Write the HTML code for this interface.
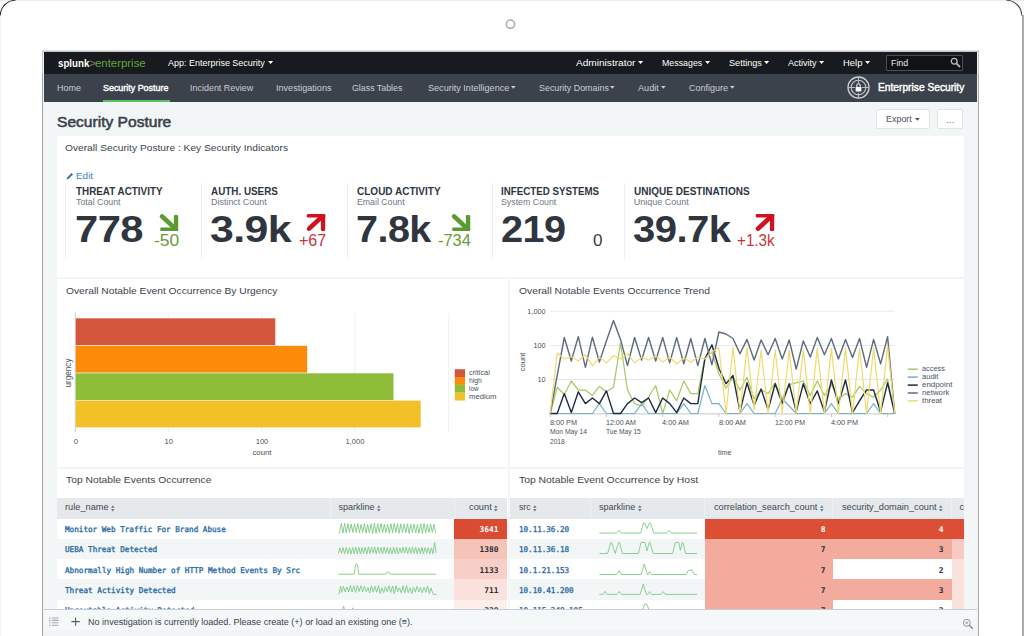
<!DOCTYPE html>
<html lang="en"><head><meta charset="utf-8"><title>Security Posture</title>
<style>
html,body{margin:0;padding:0;background:#fff;}
body{width:1024px;height:636px;overflow:hidden;position:relative;font-family:"Liberation Sans",sans-serif;}
#root{position:absolute;left:0;top:0;width:1024px;height:636px;overflow:hidden;background:#fff;}
#root span{display:inline-block;}
svg{position:absolute;overflow:visible;}
</style></head><body><div id="root">
<div style="position:absolute;left:0.00px;top:0.00px;width:1024.00px;height:1.00px;background:#ececec;"></div>
<div style="position:absolute;left:0.00px;top:16.00px;width:1.00px;height:620.00px;background:#f4f4f4;"></div>
<div style="position:absolute;left:1021.60px;top:15.00px;width:2.40px;height:621.00px;background:#ababab;"></div>
<svg style="left:0;top:0" width="1024" height="40"><path d="M0.3 15.5 A15.2 15.2 0 0 1 15.5 0.3" fill="none" stroke="#3a3a3a" stroke-width="1.1"/><path d="M1006.5 0.3 A15.2 15.2 0 0 1 1021.7 15.5" fill="none" stroke="#4a4a4a" stroke-width="1.1"/><circle cx="510.5" cy="24.2" r="4.1" fill="none" stroke="#a9a9a9" stroke-width="1.5"/></svg>
<div style="position:absolute;left:42.00px;top:49.50px;width:936.80px;height:1.20px;background:#dedede;"></div>
<div style="position:absolute;left:42.00px;top:50.60px;width:936.80px;height:1.40px;background:#c4c5c6;"></div>
<div style="position:absolute;left:42.20px;top:51.90px;width:936.40px;height:584.10px;background:#f1f1f1;"></div>
<div style="position:absolute;left:42.20px;top:51.90px;width:1.20px;height:23.00px;background:#c6c7c8;"></div>
<div style="position:absolute;left:977.50px;top:51.90px;width:1.20px;height:23.00px;background:#c6c7c8;"></div>
<div style="position:absolute;left:44.20px;top:51.90px;width:932.40px;height:584.10px;background:#f2f6f6;"></div>
<div style="position:absolute;left:44.20px;top:51.90px;width:932.40px;height:21.90px;background:#171a1e;"></div>
<div style="position:absolute;left:44.20px;top:73.80px;width:932.40px;height:28.20px;background:#3b424b;"></div>
<div style="position:absolute;left:102.90px;top:99.90px;width:66.80px;height:2.10px;background:#5cc05c;"></div>
<span id="t1" style="position:absolute;left:57.80px;transform-origin:0 50%;top:57.74px;font:700 11px/11px 'Liberation Sans', sans-serif;color:#ffffff;white-space:pre;transform:scaleX(0.8857);">splunk</span>
<span id="t2" style="position:absolute;left:88.60px;transform-origin:0 50%;top:57.94px;font:700 11px/11px 'Liberation Sans', sans-serif;color:#586e4c;white-space:pre;transform:scaleX(1.0874);">&gt;</span>
<span id="t3" style="position:absolute;left:95.40px;transform-origin:0 50%;top:57.94px;font:400 11px/11px 'Liberation Sans', sans-serif;color:#65a637;white-space:pre;transform:scaleX(1.0363);">enterprise</span>
<span id="t4" style="position:absolute;left:168.40px;transform-origin:0 50%;top:57.67px;font:400 9.4px/9.4px 'Liberation Sans', sans-serif;color:#ffffff;white-space:pre;transform:scaleX(0.9575);">App: Enterprise Security</span>
<svg style="left:268.40px;top:60.60px" width="5.2" height="3.0"><path d="M0 0H5.2L2.6 3.0Z" fill="#fff"/></svg>
<span id="t5" style="position:absolute;left:576.10px;transform-origin:0 50%;top:57.67px;font:400 9.4px/9.4px 'Liberation Sans', sans-serif;color:#ffffff;white-space:pre;transform:scaleX(1.0772);">Administrator</span>
<svg style="left:638.30px;top:60.60px" width="5.2" height="3.0"><path d="M0 0H5.2L2.6 3.0Z" fill="#fff"/></svg>
<span id="t6" style="position:absolute;left:662.00px;transform-origin:0 50%;top:57.67px;font:400 9.4px/9.4px 'Liberation Sans', sans-serif;color:#ffffff;white-space:pre;transform:scaleX(0.9407);">Messages</span>
<svg style="left:704.90px;top:60.60px" width="5.2" height="3.0"><path d="M0 0H5.2L2.6 3.0Z" fill="#fff"/></svg>
<span id="t7" style="position:absolute;left:728.60px;transform-origin:0 50%;top:57.67px;font:400 9.4px/9.4px 'Liberation Sans', sans-serif;color:#ffffff;white-space:pre;transform:scaleX(0.9712);">Settings</span>
<svg style="left:763.60px;top:60.60px" width="5.2" height="3.0"><path d="M0 0H5.2L2.6 3.0Z" fill="#fff"/></svg>
<span id="t8" style="position:absolute;left:787.60px;transform-origin:0 50%;top:57.67px;font:400 9.4px/9.4px 'Liberation Sans', sans-serif;color:#ffffff;white-space:pre;transform:scaleX(0.9629);">Activity</span>
<svg style="left:818.60px;top:60.60px" width="5.2" height="3.0"><path d="M0 0H5.2L2.6 3.0Z" fill="#fff"/></svg>
<span id="t9" style="position:absolute;left:843.00px;transform-origin:0 50%;top:57.67px;font:400 9.4px/9.4px 'Liberation Sans', sans-serif;color:#ffffff;white-space:pre;transform:scaleX(1.0062);">Help</span>
<svg style="left:864.90px;top:60.60px" width="5.2" height="3.0"><path d="M0 0H5.2L2.6 3.0Z" fill="#fff"/></svg>
<div style="position:absolute;left:885.60px;top:54.70px;width:77.70px;height:16.50px;background:#101215;box-sizing:border-box;border:1px solid #4a4f57;border-radius:1px;"></div>
<span id="t10" style="position:absolute;left:891.40px;transform-origin:0 50%;top:57.67px;font:400 9.4px/9.4px 'Liberation Sans', sans-serif;color:#e8eaec;white-space:pre;transform:scaleX(0.9425);">Find</span>
<svg style="left:950px;top:57px" width="11" height="11"><circle cx="4.2" cy="4.2" r="2.9" fill="none" stroke="#b9bec5" stroke-width="1.3"/><path d="M6.4 6.4L9.6 9.6" stroke="#b9bec5" stroke-width="1.6" stroke-linecap="round"/></svg>
<span id="t11" style="position:absolute;left:57.00px;transform-origin:0 50%;top:82.97px;font:400 9.6px/9.6px 'Liberation Sans', sans-serif;color:#c9ced4;white-space:pre;transform:scaleX(0.9377);">Home</span>
<span id="t12" style="position:absolute;left:103.00px;transform-origin:0 50%;top:82.97px;font:400 9.6px/9.6px 'Liberation Sans', sans-serif;color:#ffffff;white-space:pre;transform:scaleX(0.9291);-webkit-text-stroke:0.4px #fff;">Security Posture</span>
<span id="t13" style="position:absolute;left:190.40px;transform-origin:0 50%;top:82.97px;font:400 9.6px/9.6px 'Liberation Sans', sans-serif;color:#c9ced4;white-space:pre;transform:scaleX(0.9331);">Incident Review</span>
<span id="t14" style="position:absolute;left:275.50px;transform-origin:0 50%;top:82.97px;font:400 9.6px/9.6px 'Liberation Sans', sans-serif;color:#c9ced4;white-space:pre;transform:scaleX(0.9459);">Investigations</span>
<span id="t15" style="position:absolute;left:352.40px;transform-origin:0 50%;top:82.97px;font:400 9.6px/9.6px 'Liberation Sans', sans-serif;color:#c9ced4;white-space:pre;transform:scaleX(0.9205);">Glass Tables</span>
<span id="t16" style="position:absolute;left:428.00px;transform-origin:0 50%;top:82.97px;font:400 9.6px/9.6px 'Liberation Sans', sans-serif;color:#c9ced4;white-space:pre;transform:scaleX(0.9469);">Security Intelligence</span>
<svg style="left:511.00px;top:86.40px" width="4.6" height="2.8"><path d="M0 0H4.6L2.3 2.8Z" fill="#c9ced4"/></svg>
<span id="t17" style="position:absolute;left:538.60px;transform-origin:0 50%;top:82.97px;font:400 9.6px/9.6px 'Liberation Sans', sans-serif;color:#c9ced4;white-space:pre;transform:scaleX(0.9297);">Security Domains</span>
<svg style="left:610.20px;top:86.40px" width="4.6" height="2.8"><path d="M0 0H4.6L2.3 2.8Z" fill="#c9ced4"/></svg>
<span id="t18" style="position:absolute;left:638.40px;transform-origin:0 50%;top:82.97px;font:400 9.6px/9.6px 'Liberation Sans', sans-serif;color:#c9ced4;white-space:pre;transform:scaleX(0.9509);">Audit</span>
<svg style="left:660.80px;top:86.40px" width="4.6" height="2.8"><path d="M0 0H4.6L2.3 2.8Z" fill="#c9ced4"/></svg>
<span id="t19" style="position:absolute;left:688.90px;transform-origin:0 50%;top:82.97px;font:400 9.6px/9.6px 'Liberation Sans', sans-serif;color:#c9ced4;white-space:pre;transform:scaleX(0.9397);">Configure</span>
<svg style="left:729.80px;top:86.40px" width="4.6" height="2.8"><path d="M0 0H4.6L2.3 2.8Z" fill="#c9ced4"/></svg>
<svg style="left:847.2px;top:76.2px" width="23" height="23" viewBox="-11.5 -11.5 23 23"><circle r="10.5" fill="none" stroke="#c9cdd1" stroke-width="1.35"/><circle r="7.3" fill="none" stroke="#c3c7cb" stroke-width="1.15"/><path d="M0 -10.5V-4.6M0 10.5V5.2M-10.5 0H-3.6M10.5 0H3.6" stroke="#b9bdc2" stroke-width="1.1"/><rect x="-2.9" y="-0.6" width="5.8" height="4.6" rx="0.6" fill="#f6f7f8"/><path d="M-1.7 -0.6V-2.1A1.7 1.7 0 0 1 1.7 -2.1V-0.6" fill="none" stroke="#e9ebed" stroke-width="1.1"/></svg>
<span id="t20" style="position:absolute;left:877.50px;transform-origin:0 50%;top:82.45px;font:400 11.3px/11.3px 'Liberation Sans', sans-serif;color:#ffffff;white-space:pre;transform:scaleX(0.9043);-webkit-text-stroke:0.45px #fff;">Enterprise Security</span>
<span id="t21" style="position:absolute;left:57.20px;transform-origin:0 50%;top:114.51px;font:400 14.5px/14.5px 'Liberation Sans', sans-serif;color:#3a424b;white-space:pre;transform:scaleX(1.0743);-webkit-text-stroke:0.55px #3a424b;">Security Posture</span>
<div style="position:absolute;left:875.70px;top:109.40px;width:54.30px;height:19.80px;background:#fff;box-sizing:border-box;border:1px solid #dfe3e6;border-radius:2px;"></div>
<span id="t22" style="position:absolute;left:885.60px;transform-origin:0 50%;top:115.12px;font:400 9.3px/9.3px 'Liberation Sans', sans-serif;color:#4a525b;white-space:pre;transform:scaleX(0.9600);">Export</span>
<svg style="left:915.40px;top:118.30px" width="4.8" height="2.8"><path d="M0 0H4.8L2.4 2.8Z" fill="#4a525b"/></svg>
<div style="position:absolute;left:936.50px;top:109.40px;width:26.80px;height:19.80px;background:#fff;box-sizing:border-box;border:1px solid #dfe3e6;border-radius:2px;"></div>
<span id="t23" style="position:absolute;left:945.60px;transform-origin:0 50%;top:115.72px;font:400 9.3px/9.3px 'Liberation Sans', sans-serif;color:#6a727b;white-space:pre;transform:scaleX(1.1097);">...</span>
<div style="position:absolute;left:56.50px;top:136.30px;width:907.20px;height:140.70px;background:#fff;"></div>
<span id="t24" style="position:absolute;left:64.80px;transform-origin:0 50%;top:143.28px;font:400 9.8px/9.8px 'Liberation Sans', sans-serif;color:#3c444d;white-space:pre;transform:scaleX(1.0421);">Overall Security Posture : Key Security Indicators</span>
<svg style="left:65.8px;top:171.6px" width="8" height="8"><path d="M0.6 7.4L1.2 5.4L5.6 1L7 2.4L2.6 6.8Z" fill="#2f6fa8"/></svg>
<span id="t25" style="position:absolute;left:75.70px;transform-origin:0 50%;top:170.58px;font:400 9.8px/9.8px 'Liberation Sans', sans-serif;color:#3a86c4;white-space:pre;transform:scaleX(1.0124);">Edit</span>
<span id="t26" style="position:absolute;left:75.50px;transform-origin:0 50%;top:186.59px;font:700 10.4px/10.4px 'Liberation Sans', sans-serif;color:#2f3640;white-space:pre;transform:scaleX(0.9484);">THREAT ACTIVITY</span>
<span id="t27" style="position:absolute;left:75.50px;transform-origin:0 50%;top:197.56px;font:400 9.0px/9.0px 'Liberation Sans', sans-serif;color:#70777f;white-space:pre;transform:scaleX(0.9774);">Total Count</span>
<span id="t28" style="position:absolute;left:74.70px;transform-origin:0 50%;top:211.56px;font:700 36.6px/36.6px 'Liberation Sans', sans-serif;color:#2f3640;white-space:pre;transform:scaleX(1.1406);letter-spacing:-0.5px;">778</span>
<span id="t29" style="position:absolute;left:154.40px;transform-origin:0 50%;top:232.98px;font:400 15.8px/15.8px 'Liberation Sans', sans-serif;color:#6a9a3a;white-space:pre;transform:scaleX(1.1031);">-50</span>
<svg style="left:158.50px;top:214.20px" width="20" height="18"><path d="M3.1 2.4L16 14.4" stroke="#5b9a31" stroke-width="4.7" stroke-linecap="round" fill="none"/><rect x="1.2" y="13.6" width="18" height="3.4" rx="1.2" fill="#5b9a31"/><rect x="14.9" y="1.0" width="4.3" height="16" rx="1.2" fill="#5b9a31"/></svg>
<span id="t30" style="position:absolute;left:210.60px;transform-origin:0 50%;top:186.59px;font:700 10.4px/10.4px 'Liberation Sans', sans-serif;color:#2f3640;white-space:pre;transform:scaleX(0.9498);">AUTH. USERS</span>
<span id="t31" style="position:absolute;left:210.60px;transform-origin:0 50%;top:197.56px;font:400 9.0px/9.0px 'Liberation Sans', sans-serif;color:#70777f;white-space:pre;transform:scaleX(0.9941);">Distinct Count</span>
<span id="t32" style="position:absolute;left:209.80px;transform-origin:0 50%;top:211.56px;font:700 36.6px/36.6px 'Liberation Sans', sans-serif;color:#2f3640;white-space:pre;transform:scaleX(1.1719);letter-spacing:-0.5px;">3.9k</span>
<span id="t33" style="position:absolute;left:298.80px;transform-origin:0 50%;top:232.98px;font:400 15.8px/15.8px 'Liberation Sans', sans-serif;color:#c2373c;white-space:pre;transform:scaleX(1.0150);">+67</span>
<svg style="left:305.60px;top:213.90px" width="20" height="18"><path d="M3.1 14.6L16 2.6" stroke="#d0111e" stroke-width="4.7" stroke-linecap="round" fill="none"/><rect x="0.8" y="0" width="18.4" height="3.4" rx="1.2" fill="#d0111e"/><rect x="14.9" y="0" width="4.3" height="16.9" rx="1.2" fill="#d0111e"/></svg>
<span id="t34" style="position:absolute;left:357.00px;transform-origin:0 50%;top:186.59px;font:700 10.4px/10.4px 'Liberation Sans', sans-serif;color:#2f3640;white-space:pre;transform:scaleX(0.9633);">CLOUD ACTIVITY</span>
<span id="t35" style="position:absolute;left:357.00px;transform-origin:0 50%;top:197.56px;font:400 9.0px/9.0px 'Liberation Sans', sans-serif;color:#70777f;white-space:pre;transform:scaleX(0.9708);">Email Count</span>
<span id="t36" style="position:absolute;left:356.20px;transform-origin:0 50%;top:211.56px;font:700 36.6px/36.6px 'Liberation Sans', sans-serif;color:#2f3640;white-space:pre;transform:scaleX(1.0809);letter-spacing:-0.5px;">7.8k</span>
<span id="t37" style="position:absolute;left:437.70px;transform-origin:0 50%;top:232.98px;font:400 15.8px/15.8px 'Liberation Sans', sans-serif;color:#6a9a3a;white-space:pre;transform:scaleX(1.0403);">-734</span>
<svg style="left:450.90px;top:214.20px" width="20" height="18"><path d="M3.1 2.4L16 14.4" stroke="#5b9a31" stroke-width="4.7" stroke-linecap="round" fill="none"/><rect x="1.2" y="13.6" width="18" height="3.4" rx="1.2" fill="#5b9a31"/><rect x="14.9" y="1.0" width="4.3" height="16" rx="1.2" fill="#5b9a31"/></svg>
<span id="t38" style="position:absolute;left:501.30px;transform-origin:0 50%;top:186.59px;font:700 10.4px/10.4px 'Liberation Sans', sans-serif;color:#2f3640;white-space:pre;transform:scaleX(0.9388);">INFECTED SYSTEMS</span>
<span id="t39" style="position:absolute;left:501.30px;transform-origin:0 50%;top:197.56px;font:400 9.0px/9.0px 'Liberation Sans', sans-serif;color:#70777f;white-space:pre;transform:scaleX(0.9782);">System Count</span>
<span id="t40" style="position:absolute;left:500.50px;transform-origin:0 50%;top:211.56px;font:700 36.6px/36.6px 'Liberation Sans', sans-serif;color:#2f3640;white-space:pre;transform:scaleX(1.0835);letter-spacing:-0.5px;">219</span>
<span id="t41" style="position:absolute;left:592.50px;transform-origin:0 50%;top:232.98px;font:400 15.8px/15.8px 'Liberation Sans', sans-serif;color:#3a3f47;white-space:pre;transform:scaleX(1.0799);">0</span>
<span id="t42" style="position:absolute;left:633.80px;transform-origin:0 50%;top:186.59px;font:700 10.4px/10.4px 'Liberation Sans', sans-serif;color:#2f3640;white-space:pre;transform:scaleX(0.9642);">UNIQUE DESTINATIONS</span>
<span id="t43" style="position:absolute;left:633.80px;transform-origin:0 50%;top:197.56px;font:400 9.0px/9.0px 'Liberation Sans', sans-serif;color:#70777f;white-space:pre;">Unique Count</span>
<span id="t44" style="position:absolute;left:633.00px;transform-origin:0 50%;top:211.56px;font:700 36.6px/36.6px 'Liberation Sans', sans-serif;color:#2f3640;white-space:pre;transform:scaleX(1.0961);letter-spacing:-0.5px;">39.7k</span>
<span id="t45" style="position:absolute;left:736.90px;transform-origin:0 50%;top:232.98px;font:400 15.8px/15.8px 'Liberation Sans', sans-serif;color:#c2373c;white-space:pre;transform:scaleX(0.9643);">+1.3k</span>
<svg style="left:754.70px;top:213.90px" width="20" height="18"><path d="M3.1 14.6L16 2.6" stroke="#d0111e" stroke-width="4.7" stroke-linecap="round" fill="none"/><rect x="0.8" y="0" width="18.4" height="3.4" rx="1.2" fill="#d0111e"/><rect x="14.9" y="0" width="4.3" height="16.9" rx="1.2" fill="#d0111e"/></svg>
<div style="position:absolute;left:65.30px;top:183.40px;width:1.00px;height:75.20px;background:#eeeff0;"></div>
<div style="position:absolute;left:200.90px;top:183.40px;width:1.00px;height:75.20px;background:#eeeff0;"></div>
<div style="position:absolute;left:347.30px;top:183.40px;width:1.00px;height:75.20px;background:#eeeff0;"></div>
<div style="position:absolute;left:492.00px;top:183.40px;width:1.00px;height:75.20px;background:#eeeff0;"></div>
<div style="position:absolute;left:623.90px;top:183.40px;width:1.00px;height:75.20px;background:#eeeff0;"></div>
<div style="position:absolute;left:56.50px;top:279.00px;width:451.30px;height:187.70px;background:#fff;"></div>
<div style="position:absolute;left:510.30px;top:279.00px;width:453.40px;height:187.70px;background:#fff;"></div>
<span id="t46" style="position:absolute;left:65.50px;transform-origin:0 50%;top:286.48px;font:400 9.8px/9.8px 'Liberation Sans', sans-serif;color:#3c444d;white-space:pre;transform:scaleX(1.0469);">Overall Notable Event Occurrence By Urgency</span>
<span id="t47" style="position:absolute;left:518.60px;transform-origin:0 50%;top:286.48px;font:400 9.8px/9.8px 'Liberation Sans', sans-serif;color:#3c444d;white-space:pre;transform:scaleX(1.0533);">Overall Notable Events Occurrence Trend</span>
<svg style="left:0;top:0" width="1024" height="636"><path d="M168.8 313.5V432" stroke="#eff0f1" stroke-width="1"/><path d="M262.0 313.5V432" stroke="#eff0f1" stroke-width="1"/><path d="M355.0 313.5V432" stroke="#eff0f1" stroke-width="1"/><path d="M448.7 313.5V432" stroke="#eff0f1" stroke-width="1"/><path d="M75.3 312.5V432.5" stroke="#c9cdd1" stroke-width="1"/><rect x="75.8" y="318.3" width="199.5" height="26.8" fill="#d2573d"/><rect x="75.8" y="345.8" width="231.4" height="26.8" fill="#fc8b0a"/><rect x="75.8" y="373.3" width="317.7" height="26.8" fill="#8ebd3a"/><rect x="75.8" y="400.6" width="344.9" height="26.8" fill="#f4c028"/><rect x="454.8" y="369.2" width="10.2" height="7.9" fill="#d2573d"/><rect x="454.8" y="377.0" width="10.2" height="7.9" fill="#fc8b0a"/><rect x="454.8" y="384.8" width="10.2" height="7.9" fill="#8ebd3a"/><rect x="454.8" y="392.6" width="10.2" height="7.9" fill="#f4c028"/></svg>
<span id="t48" style="position:absolute;left:75.90px;transform-origin:0 50%;top:437.94px;font:400 7.6px/7.6px 'Liberation Sans', sans-serif;color:#4a525b;white-space:pre;transform:translateX(-50%);">0</span>
<span id="t49" style="position:absolute;left:168.80px;transform-origin:0 50%;top:437.94px;font:400 7.6px/7.6px 'Liberation Sans', sans-serif;color:#4a525b;white-space:pre;transform:translateX(-50%);">10</span>
<span id="t50" style="position:absolute;left:262.00px;transform-origin:0 50%;top:437.94px;font:400 7.6px/7.6px 'Liberation Sans', sans-serif;color:#4a525b;white-space:pre;transform:translateX(-50%);">100</span>
<span id="t51" style="position:absolute;left:354.90px;transform-origin:0 50%;top:437.94px;font:400 7.6px/7.6px 'Liberation Sans', sans-serif;color:#4a525b;white-space:pre;transform:translateX(-50%);">1,000</span>
<span id="t52" style="position:absolute;left:262.00px;transform-origin:0 50%;top:448.62px;font:400 7.8px/7.8px 'Liberation Sans', sans-serif;color:#4a525b;white-space:pre;transform:translateX(-50%);">count</span>
<span style="position:absolute;left:69.4px;top:373.0px;font:400 8.2px/8px 'Liberation Sans', sans-serif;color:#4a525b;white-space:pre;transform:translate(-50%,-50%) rotate(-90deg);">urgency</span>
<span id="t53" style="position:absolute;left:468.80px;transform-origin:0 50%;top:369.14px;font:400 7.6px/7.6px 'Liberation Sans', sans-serif;color:#4a525b;white-space:pre;transform:scaleX(0.9660);">critical</span>
<span id="t54" style="position:absolute;left:468.80px;transform-origin:0 50%;top:376.99px;font:400 7.6px/7.6px 'Liberation Sans', sans-serif;color:#4a525b;white-space:pre;transform:scaleX(0.8914);">high</span>
<span id="t55" style="position:absolute;left:468.80px;transform-origin:0 50%;top:384.84px;font:400 7.6px/7.6px 'Liberation Sans', sans-serif;color:#4a525b;white-space:pre;transform:scaleX(0.8416);">low</span>
<span id="t56" style="position:absolute;left:468.80px;transform-origin:0 50%;top:392.69px;font:400 7.6px/7.6px 'Liberation Sans', sans-serif;color:#4a525b;white-space:pre;transform:scaleX(1.0142);">medium</span>
<svg style="left:0;top:0" width="1024" height="636"><path d="M550 311.2H894.5" stroke="#e6e8ea" stroke-width="1"/><path d="M550 345.5H894.5" stroke="#e6e8ea" stroke-width="1"/><path d="M550 379.5H894.5" stroke="#e6e8ea" stroke-width="1"/><path d="M550 413.9H894.5" stroke="#c3c8cc" stroke-width="1"/><path d="M550.2 413.5V417.0" stroke="#c3c8cc" stroke-width="1"/><path d="M606.4 413.5V417.0" stroke="#c3c8cc" stroke-width="1"/><path d="M662.7 413.5V417.0" stroke="#c3c8cc" stroke-width="1"/><path d="M718.9 413.5V417.0" stroke="#c3c8cc" stroke-width="1"/><path d="M775.2 413.5V417.0" stroke="#c3c8cc" stroke-width="1"/><path d="M831.4 413.5V417.0" stroke="#c3c8cc" stroke-width="1"/><path d="M887.6 413.5V417.0" stroke="#c3c8cc" stroke-width="1"/><polyline points="550.2,413.5 557.2,387.3 564.3,394.5 571.3,381.0 578.3,390.0 585.4,390.0 592.4,395.4 599.4,386.4 606.4,391.8 613.5,387.3 620.5,343.0 627.5,390.0 634.6,403.6 641.6,406.0 648.6,397.0 655.7,385.5 662.7,413.5 669.7,390.0 676.7,400.8 683.8,381.0 690.8,393.6 697.8,393.6 704.9,357.4 711.9,352.0 718.9,373.7 726.0,388.0 733.0,377.3 740.0,390.0 747.0,377.3 754.1,399.0 761.1,390.0 768.1,393.6 775.2,382.8 782.2,399.0 789.2,384.6 796.2,382.8 803.3,381.0 810.3,395.4 817.3,381.0 824.4,395.4 831.4,384.6 838.4,399.0 845.5,393.6 852.5,397.2 859.5,386.4 866.6,393.6 873.6,397.2 880.6,390.0 887.6,379.1 894.7,413.5" fill="none" stroke="#a9c964" stroke-width="1.25" stroke-linejoin="round"/><polyline points="550.2,413.5 557.2,413.5 564.3,413.5 571.3,413.5 578.3,413.5 585.4,413.5 592.4,413.5 599.4,403.6 606.4,413.5 613.5,413.5 620.5,413.5 627.5,413.5 634.6,413.5 641.6,403.6 648.6,413.5 655.7,413.5 662.7,413.5 669.7,413.5 676.7,413.5 683.8,403.6 690.8,413.5 697.8,413.5 704.9,385.5 711.9,403.6 718.9,403.6 726.0,413.5 733.0,413.5 740.0,413.5 747.0,403.6 754.1,413.5 761.1,413.5 768.1,413.5 775.2,413.5 782.2,399.0 789.2,406.0 796.2,413.5 803.3,413.5 810.3,413.5 817.3,413.5 824.4,413.5 831.4,403.6 838.4,413.5 845.5,413.5 852.5,413.5 859.5,413.5 866.6,413.5 873.6,403.6 880.6,413.5 887.6,413.5 894.7,413.5" fill="none" stroke="#74b3c9" stroke-width="1.2" stroke-linejoin="round"/><polyline points="550.2,413.5 557.2,413.5 564.3,393.6 571.3,412.6 578.3,391.8 585.4,403.6 592.4,398.0 599.4,403.6 606.4,390.9 613.5,413.5 620.5,413.5 627.5,403.6 634.6,398.0 641.6,402.6 648.6,398.0 655.7,412.6 662.7,398.0 669.7,403.6 676.7,412.6 683.8,398.0 690.8,403.6 697.8,403.6 704.9,359.0 711.9,344.8 718.9,368.3 726.0,383.7 733.0,375.5 740.0,411.7 747.0,382.8 754.1,405.4 761.1,389.0 768.1,409.9 775.2,383.7 782.2,403.6 789.2,383.7 796.2,411.7 803.3,383.7 810.3,403.6 817.3,390.9 824.4,411.7 831.4,380.0 838.4,403.6 845.5,380.0 852.5,412.6 859.5,400.8 866.6,390.0 873.6,390.0 880.6,411.7 887.6,382.8 894.7,413.5" fill="none" stroke="#1d2c42" stroke-width="1.4" stroke-linejoin="round"/><polyline points="550.2,413.5 557.2,375.5 564.3,337.5 571.3,361.0 578.3,336.6 585.4,367.4 592.4,337.2 599.4,362.0 606.4,341.0 613.5,320.4 620.5,339.4 627.5,365.6 634.6,337.5 641.6,360.0 648.6,337.5 655.7,361.0 662.7,337.5 669.7,362.9 676.7,337.5 683.8,363.8 690.8,338.5 697.8,365.6 704.9,338.5 711.9,364.7 718.9,332.0 726.0,334.0 733.0,338.5 740.0,353.8 747.0,339.4 754.1,360.0 761.1,340.0 768.1,354.7 775.2,338.5 782.2,359.0 789.2,340.0 796.2,369.0 803.3,341.0 810.3,357.0 817.3,337.5 824.4,354.7 831.4,338.5 838.4,359.0 845.5,339.4 852.5,357.4 859.5,338.5 866.6,367.4 873.6,339.4 880.6,363.8 887.6,336.6 894.7,413.5" fill="none" stroke="#5d6b80" stroke-width="1.4" stroke-linejoin="round"/><polyline points="550.2,413.5 557.2,353.0 564.3,359.0 571.3,356.5 578.3,361.0 585.4,354.7 592.4,365.6 599.4,357.4 606.4,362.9 613.5,355.6 620.5,359.0 627.5,353.8 634.6,362.9 641.6,357.4 648.6,360.0 655.7,356.0 662.7,362.0 669.7,357.0 676.7,364.0 683.8,358.0 690.8,362.0 697.8,357.0 704.9,359.0 711.9,352.0 718.9,347.5 726.0,413.5 733.0,347.5 740.0,413.5 747.0,347.5 754.1,410.0 761.1,350.0 768.1,413.5 775.2,350.0 782.2,413.5 789.2,350.0 796.2,413.5 803.3,350.0 810.3,413.5 817.3,348.4 824.4,413.5 831.4,348.4 838.4,413.5 845.5,348.4 852.5,413.5 859.5,348.4 866.6,413.5 873.6,348.4 880.6,413.5 887.6,345.7 894.7,413.5" fill="none" stroke="#efdb6c" stroke-width="1.2" stroke-linejoin="round"/><path d="M907.7 369.2H917.8" stroke="#a9c964" stroke-width="1.5"/><path d="M907.7 377.1H917.8" stroke="#74b3c9" stroke-width="1.5"/><path d="M907.7 385.1H917.8" stroke="#1d2c42" stroke-width="1.5"/><path d="M907.7 393.0H917.8" stroke="#5d6b80" stroke-width="1.5"/><path d="M907.7 400.9H917.8" stroke="#efdb6c" stroke-width="1.5"/></svg>
<span id="t57" style="position:absolute;right:478.40px;transform-origin:100% 50%;top:307.88px;font:400 7.3px/7.3px 'Liberation Sans', sans-serif;color:#4a525b;white-space:pre;">1,000</span>
<span id="t58" style="position:absolute;right:478.40px;transform-origin:100% 50%;top:342.18px;font:400 7.3px/7.3px 'Liberation Sans', sans-serif;color:#4a525b;white-space:pre;">100</span>
<span id="t59" style="position:absolute;right:478.40px;transform-origin:100% 50%;top:376.18px;font:400 7.3px/7.3px 'Liberation Sans', sans-serif;color:#4a525b;white-space:pre;">10</span>
<span style="position:absolute;left:523.3px;top:362.3px;font:400 7.6px/8px 'Liberation Sans', sans-serif;color:#4a525b;white-space:pre;transform:translate(-50%,-50%) rotate(-90deg);">count</span>
<span id="t60" style="position:absolute;left:549.90px;transform-origin:0 50%;top:419.14px;font:400 7.6px/7.6px 'Liberation Sans', sans-serif;color:#4a525b;white-space:pre;transform:scaleX(0.9512);">8:00 PM</span>
<span id="t61" style="position:absolute;left:606.00px;transform-origin:0 50%;top:419.14px;font:400 7.6px/7.6px 'Liberation Sans', sans-serif;color:#4a525b;white-space:pre;transform:scaleX(0.9348);">12:00 AM</span>
<span id="t62" style="position:absolute;left:662.30px;transform-origin:0 50%;top:419.14px;font:400 7.6px/7.6px 'Liberation Sans', sans-serif;color:#4a525b;white-space:pre;transform:scaleX(0.9686);">4:00 AM</span>
<span id="t63" style="position:absolute;left:718.60px;transform-origin:0 50%;top:419.14px;font:400 7.6px/7.6px 'Liberation Sans', sans-serif;color:#4a525b;white-space:pre;transform:scaleX(0.9686);">8:00 AM</span>
<span id="t64" style="position:absolute;left:774.80px;transform-origin:0 50%;top:419.14px;font:400 7.6px/7.6px 'Liberation Sans', sans-serif;color:#4a525b;white-space:pre;transform:scaleX(0.9226);">12:00 PM</span>
<span id="t65" style="position:absolute;left:831.00px;transform-origin:0 50%;top:419.14px;font:400 7.6px/7.6px 'Liberation Sans', sans-serif;color:#4a525b;white-space:pre;transform:scaleX(0.9547);">4:00 PM</span>
<span id="t66" style="position:absolute;left:549.90px;transform-origin:0 50%;top:428.14px;font:400 7.6px/7.6px 'Liberation Sans', sans-serif;color:#4a525b;white-space:pre;transform:scaleX(0.8852);">Mon May 14</span>
<span id="t67" style="position:absolute;left:549.90px;transform-origin:0 50%;top:438.14px;font:400 7.6px/7.6px 'Liberation Sans', sans-serif;color:#4a525b;white-space:pre;transform:scaleX(0.8695);">2018</span>
<span id="t68" style="position:absolute;left:606.00px;transform-origin:0 50%;top:428.14px;font:400 7.6px/7.6px 'Liberation Sans', sans-serif;color:#4a525b;white-space:pre;transform:scaleX(0.8738);">Tue May 15</span>
<span id="t69" style="position:absolute;left:718.00px;transform-origin:0 50%;top:448.62px;font:400 7.8px/7.8px 'Liberation Sans', sans-serif;color:#4a525b;white-space:pre;transform:scaleX(0.9162);">time</span>
<span id="t70" style="position:absolute;left:921.60px;transform-origin:0 50%;top:365.44px;font:400 7.6px/7.6px 'Liberation Sans', sans-serif;color:#4a525b;white-space:pre;transform:scaleX(0.9644);">access</span>
<span id="t71" style="position:absolute;left:921.60px;transform-origin:0 50%;top:373.37px;font:400 7.6px/7.6px 'Liberation Sans', sans-serif;color:#4a525b;white-space:pre;transform:scaleX(0.9958);">audit</span>
<span id="t72" style="position:absolute;left:921.60px;transform-origin:0 50%;top:381.30px;font:400 7.6px/7.6px 'Liberation Sans', sans-serif;color:#4a525b;white-space:pre;transform:scaleX(1.0432);">endpoint</span>
<span id="t73" style="position:absolute;left:921.60px;transform-origin:0 50%;top:389.23px;font:400 7.6px/7.6px 'Liberation Sans', sans-serif;color:#4a525b;white-space:pre;transform:scaleX(1.0303);">network</span>
<span id="t74" style="position:absolute;left:921.60px;transform-origin:0 50%;top:397.16px;font:400 7.6px/7.6px 'Liberation Sans', sans-serif;color:#4a525b;white-space:pre;transform:scaleX(1.0298);">threat</span>
<div style="position:absolute;left:56.50px;top:468.70px;width:451.30px;height:167.30px;background:#fff;"></div>
<div style="position:absolute;left:510.30px;top:468.70px;width:453.40px;height:167.30px;background:#fff;"></div>
<span id="t75" style="position:absolute;left:65.50px;transform-origin:0 50%;top:474.58px;font:400 9.8px/9.8px 'Liberation Sans', sans-serif;color:#3c444d;white-space:pre;transform:scaleX(1.0518);">Top Notable Events Occurrence</span>
<span id="t76" style="position:absolute;left:518.60px;transform-origin:0 50%;top:474.58px;font:400 9.8px/9.8px 'Liberation Sans', sans-serif;color:#3c444d;white-space:pre;transform:scaleX(1.0581);">Top Notable Event Occurrence by Host</span>
<div style="position:absolute;left:56.50px;top:497.50px;width:450.90px;height:21.00px;background:#e5e9ec;"></div>
<div style="position:absolute;left:510.30px;top:497.50px;width:453.40px;height:21.00px;background:#e5e9ec;"></div>
<div style="position:absolute;left:330.10px;top:497.50px;width:1.00px;height:21.00px;background:#eef1f3;"></div>
<div style="position:absolute;left:453.90px;top:497.50px;width:1.00px;height:21.00px;background:#eef1f3;"></div>
<div style="position:absolute;left:590.30px;top:497.50px;width:1.00px;height:21.00px;background:#eef1f3;"></div>
<div style="position:absolute;left:704.40px;top:497.50px;width:1.00px;height:21.00px;background:#eef1f3;"></div>
<div style="position:absolute;left:832.10px;top:497.50px;width:1.00px;height:21.00px;background:#eef1f3;"></div>
<div style="position:absolute;left:951.10px;top:497.50px;width:1.00px;height:21.00px;background:#eef1f3;"></div>
<div style="position:absolute;left:56.50px;top:538.80px;width:397.90px;height:20.35px;background:#f3f6f7;"></div>
<div style="position:absolute;left:510.30px;top:538.80px;width:194.60px;height:20.35px;background:#f3f6f7;"></div>
<div style="position:absolute;left:56.50px;top:579.40px;width:397.90px;height:20.35px;background:#f3f6f7;"></div>
<div style="position:absolute;left:510.30px;top:579.40px;width:194.60px;height:20.35px;background:#f3f6f7;"></div>
<span id="t77" style="position:absolute;left:64.60px;transform-origin:0 50%;top:503.32px;font:400 9.0px/9.0px 'Liberation Sans', sans-serif;color:#3f4750;white-space:pre;transform:scaleX(1.0251);">rule_name</span>
<svg style="left:110.60px;top:505.00px" width="4" height="7"><path d="M0 2.7L1.8 0.3L3.6 2.7ZM0 4.1L1.8 6.5L3.6 4.1Z" fill="#6f7780"/></svg>
<span id="t78" style="position:absolute;left:338.50px;transform-origin:0 50%;top:503.32px;font:400 9.0px/9.0px 'Liberation Sans', sans-serif;color:#3f4750;white-space:pre;">sparkline</span>
<svg style="left:377.00px;top:505.00px" width="4" height="7"><path d="M0 2.7L1.8 0.3L3.6 2.7ZM0 4.1L1.8 6.5L3.6 4.1Z" fill="#6f7780"/></svg>
<span id="t79" style="position:absolute;left:468.80px;transform-origin:0 50%;top:503.32px;font:400 9.0px/9.0px 'Liberation Sans', sans-serif;color:#3f4750;white-space:pre;transform:scaleX(1.0349);">count</span>
<svg style="left:494.20px;top:505.00px" width="4" height="7"><path d="M0 2.7L1.8 0.3L3.6 2.7ZM0 4.1L1.8 6.5L3.6 4.1Z" fill="#6f7780"/></svg>
<span id="t80" style="position:absolute;left:519.00px;transform-origin:0 50%;top:503.32px;font:400 9.0px/9.0px 'Liberation Sans', sans-serif;color:#3f4750;white-space:pre;transform:scaleX(0.9667);">src</span>
<svg style="left:533.00px;top:505.00px" width="4" height="7"><path d="M0 2.7L1.8 0.3L3.6 2.7ZM0 4.1L1.8 6.5L3.6 4.1Z" fill="#6f7780"/></svg>
<span id="t81" style="position:absolute;left:599.40px;transform-origin:0 50%;top:503.32px;font:400 9.0px/9.0px 'Liberation Sans', sans-serif;color:#3f4750;white-space:pre;transform:scaleX(1.0047);">sparkline</span>
<svg style="left:638.00px;top:505.00px" width="4" height="7"><path d="M0 2.7L1.8 0.3L3.6 2.7ZM0 4.1L1.8 6.5L3.6 4.1Z" fill="#6f7780"/></svg>
<span id="t82" style="position:absolute;left:714.20px;transform-origin:0 50%;top:503.32px;font:400 9.0px/9.0px 'Liberation Sans', sans-serif;color:#3f4750;white-space:pre;transform:scaleX(1.0231);">correlation_search_count</span>
<svg style="left:820.40px;top:505.00px" width="4" height="7"><path d="M0 2.7L1.8 0.3L3.6 2.7ZM0 4.1L1.8 6.5L3.6 4.1Z" fill="#6f7780"/></svg>
<span id="t83" style="position:absolute;left:841.60px;transform-origin:0 50%;top:503.32px;font:400 9.0px/9.0px 'Liberation Sans', sans-serif;color:#3f4750;white-space:pre;transform:scaleX(1.0220);">security_domain_count</span>
<svg style="left:939.00px;top:505.00px" width="4" height="7"><path d="M0 2.7L1.8 0.3L3.6 2.7ZM0 4.1L1.8 6.5L3.6 4.1Z" fill="#6f7780"/></svg>
<span id="t84" style="position:absolute;left:959.60px;transform-origin:0 50%;top:503.32px;font:400 9.0px/9.0px 'Liberation Sans', sans-serif;color:#3f4750;white-space:pre;">c</span>
<span id="t85" style="position:absolute;left:64.50px;transform-origin:0 50%;top:525.90px;font:400 7.9px/7.9px 'DejaVu Sans Mono', 'Liberation Mono', monospace;color:#2d6ea6;white-space:pre;transform:scaleX(0.9670);-webkit-text-stroke:0.35px #2d6ea6;">Monitor Web Traffic For Brand Abuse</span>
<div style="position:absolute;left:454.40px;top:518.50px;width:53.00px;height:20.45px;background:#da4c31;"></div>
<span id="t86" style="position:absolute;right:525.60px;transform-origin:100% 50%;top:525.90px;font:700 7.9px/7.9px 'DejaVu Sans Mono', 'Liberation Mono', monospace;color:#fff;white-space:pre;">3641</span>
<span id="t87" style="position:absolute;left:64.50px;transform-origin:0 50%;top:546.20px;font:400 7.9px/7.9px 'DejaVu Sans Mono', 'Liberation Mono', monospace;color:#2d6ea6;white-space:pre;transform:scaleX(0.9693);-webkit-text-stroke:0.35px #2d6ea6;">UEBA Threat Detected</span>
<div style="position:absolute;left:454.40px;top:538.80px;width:53.00px;height:20.45px;background:#f6c3b9;"></div>
<span id="t88" style="position:absolute;right:525.60px;transform-origin:100% 50%;top:546.20px;font:700 7.9px/7.9px 'DejaVu Sans Mono', 'Liberation Mono', monospace;color:#2a2f36;white-space:pre;">1380</span>
<span id="t89" style="position:absolute;left:64.50px;transform-origin:0 50%;top:566.50px;font:400 7.9px/7.9px 'DejaVu Sans Mono', 'Liberation Mono', monospace;color:#2d6ea6;white-space:pre;transform:scaleX(0.9704);-webkit-text-stroke:0.35px #2d6ea6;">Abnormally High Number of HTTP Method Events By Src</span>
<div style="position:absolute;left:454.40px;top:559.10px;width:53.00px;height:20.45px;background:#f8cfc7;"></div>
<span id="t90" style="position:absolute;right:525.60px;transform-origin:100% 50%;top:566.50px;font:700 7.9px/7.9px 'DejaVu Sans Mono', 'Liberation Mono', monospace;color:#2a2f36;white-space:pre;">1133</span>
<span id="t91" style="position:absolute;left:64.50px;transform-origin:0 50%;top:586.80px;font:400 7.9px/7.9px 'DejaVu Sans Mono', 'Liberation Mono', monospace;color:#2d6ea6;white-space:pre;transform:scaleX(0.9709);-webkit-text-stroke:0.35px #2d6ea6;">Threat Activity Detected</span>
<div style="position:absolute;left:454.40px;top:579.40px;width:53.00px;height:20.45px;background:#fbe1dc;"></div>
<span id="t92" style="position:absolute;right:525.60px;transform-origin:100% 50%;top:586.80px;font:700 7.9px/7.9px 'DejaVu Sans Mono', 'Liberation Mono', monospace;color:#2a2f36;white-space:pre;">711</span>
<span id="t93" style="position:absolute;left:64.50px;transform-origin:0 50%;top:607.10px;font:400 7.9px/7.9px 'DejaVu Sans Mono', 'Liberation Mono', monospace;color:#2d6ea6;white-space:pre;transform:scaleX(0.9735);-webkit-text-stroke:0.35px #2d6ea6;">Unroutable Activity Detected</span>
<div style="position:absolute;left:454.40px;top:599.70px;width:53.00px;height:20.45px;background:#fdeeeb;"></div>
<span id="t94" style="position:absolute;right:525.60px;transform-origin:100% 50%;top:607.10px;font:700 7.9px/7.9px 'DejaVu Sans Mono', 'Liberation Mono', monospace;color:#2a2f36;white-space:pre;">338</span>
<span id="t95" style="position:absolute;left:519.00px;transform-origin:0 50%;top:525.90px;font:400 7.9px/7.9px 'DejaVu Sans Mono', 'Liberation Mono', monospace;color:#2d6ea6;white-space:pre;transform:scaleX(0.9576);-webkit-text-stroke:0.35px #2d6ea6;">10.11.36.20</span>
<div style="position:absolute;left:704.90px;top:518.50px;width:127.70px;height:20.45px;background:#dc4f35;"></div>
<span id="t96" style="position:absolute;right:198.60px;transform-origin:100% 50%;top:525.90px;font:700 7.9px/7.9px 'DejaVu Sans Mono', 'Liberation Mono', monospace;color:#fff;white-space:pre;">8</span>
<div style="position:absolute;left:832.60px;top:518.50px;width:119.00px;height:20.45px;background:#dc4f35;"></div>
<span id="t97" style="position:absolute;right:80.40px;transform-origin:100% 50%;top:525.90px;font:700 7.9px/7.9px 'DejaVu Sans Mono', 'Liberation Mono', monospace;color:#fff;white-space:pre;">4</span>
<div style="position:absolute;left:951.60px;top:518.50px;width:12.10px;height:20.45px;background:#dc4f35;"></div>
<span id="t98" style="position:absolute;left:519.00px;transform-origin:0 50%;top:546.20px;font:400 7.9px/7.9px 'DejaVu Sans Mono', 'Liberation Mono', monospace;color:#2d6ea6;white-space:pre;transform:scaleX(0.9576);-webkit-text-stroke:0.35px #2d6ea6;">10.11.36.18</span>
<div style="position:absolute;left:704.90px;top:538.80px;width:127.70px;height:20.45px;background:#f2ab9c;"></div>
<span id="t99" style="position:absolute;right:198.60px;transform-origin:100% 50%;top:546.20px;font:700 7.9px/7.9px 'DejaVu Sans Mono', 'Liberation Mono', monospace;color:#2a2f36;white-space:pre;">7</span>
<div style="position:absolute;left:832.60px;top:538.80px;width:119.00px;height:20.45px;background:#f2ab9c;"></div>
<span id="t100" style="position:absolute;right:80.40px;transform-origin:100% 50%;top:546.20px;font:700 7.9px/7.9px 'DejaVu Sans Mono', 'Liberation Mono', monospace;color:#2a2f36;white-space:pre;">3</span>
<div style="position:absolute;left:951.60px;top:538.80px;width:12.10px;height:20.45px;background:#f7cbc2;"></div>
<span id="t101" style="position:absolute;left:519.00px;transform-origin:0 50%;top:566.50px;font:400 7.9px/7.9px 'DejaVu Sans Mono', 'Liberation Mono', monospace;color:#2d6ea6;white-space:pre;transform:scaleX(0.9576);-webkit-text-stroke:0.35px #2d6ea6;">10.1.21.153</span>
<div style="position:absolute;left:704.90px;top:559.10px;width:127.70px;height:20.45px;background:#f2ab9c;"></div>
<span id="t102" style="position:absolute;right:198.60px;transform-origin:100% 50%;top:566.50px;font:700 7.9px/7.9px 'DejaVu Sans Mono', 'Liberation Mono', monospace;color:#2a2f36;white-space:pre;">7</span>
<div style="position:absolute;left:832.60px;top:559.10px;width:119.00px;height:20.45px;background:#ffffff;"></div>
<span id="t103" style="position:absolute;right:80.40px;transform-origin:100% 50%;top:566.50px;font:700 7.9px/7.9px 'DejaVu Sans Mono', 'Liberation Mono', monospace;color:#2a2f36;white-space:pre;">2</span>
<div style="position:absolute;left:951.60px;top:559.10px;width:12.10px;height:20.45px;background:#fbe1dc;"></div>
<span id="t104" style="position:absolute;left:519.00px;transform-origin:0 50%;top:586.80px;font:400 7.9px/7.9px 'DejaVu Sans Mono', 'Liberation Mono', monospace;color:#2d6ea6;white-space:pre;transform:scaleX(0.9576);-webkit-text-stroke:0.35px #2d6ea6;">10.10.41.200</span>
<div style="position:absolute;left:704.90px;top:579.40px;width:127.70px;height:20.45px;background:#f2ab9c;"></div>
<span id="t105" style="position:absolute;right:198.60px;transform-origin:100% 50%;top:586.80px;font:700 7.9px/7.9px 'DejaVu Sans Mono', 'Liberation Mono', monospace;color:#2a2f36;white-space:pre;">7</span>
<div style="position:absolute;left:832.60px;top:579.40px;width:119.00px;height:20.45px;background:#f2ab9c;"></div>
<span id="t106" style="position:absolute;right:80.40px;transform-origin:100% 50%;top:586.80px;font:700 7.9px/7.9px 'DejaVu Sans Mono', 'Liberation Mono', monospace;color:#2a2f36;white-space:pre;">3</span>
<div style="position:absolute;left:951.60px;top:579.40px;width:12.10px;height:20.45px;background:#fbe1dc;"></div>
<span id="t107" style="position:absolute;left:519.00px;transform-origin:0 50%;top:607.10px;font:400 7.9px/7.9px 'DejaVu Sans Mono', 'Liberation Mono', monospace;color:#2d6ea6;white-space:pre;transform:scaleX(0.9577);-webkit-text-stroke:0.35px #2d6ea6;">10.115.248.105</span>
<div style="position:absolute;left:704.90px;top:599.70px;width:127.70px;height:20.45px;background:#f2ab9c;"></div>
<span id="t108" style="position:absolute;right:198.60px;transform-origin:100% 50%;top:607.10px;font:700 7.9px/7.9px 'DejaVu Sans Mono', 'Liberation Mono', monospace;color:#2a2f36;white-space:pre;">7</span>
<div style="position:absolute;left:832.60px;top:599.70px;width:119.00px;height:20.45px;background:#ffffff;"></div>
<span id="t109" style="position:absolute;right:80.40px;transform-origin:100% 50%;top:607.10px;font:700 7.9px/7.9px 'DejaVu Sans Mono', 'Liberation Mono', monospace;color:#2a2f36;white-space:pre;">2</span>
<div style="position:absolute;left:951.60px;top:599.70px;width:12.10px;height:20.45px;background:#fbe1dc;"></div>
<svg style="left:0;top:0" width="1024" height="636"><polyline points="338.4,533.4 339.6,532.8 341.3,523.4 342.9,533.2 344.6,523.3 346.2,533.1 347.9,523.7 349.5,532.4 351.2,523.9 352.8,532.4 354.5,523.8 356.2,532.4 357.8,523.3 359.5,532.9 361.1,524.4 362.8,532.5 364.4,523.5 366.1,533.2 367.7,524.5 369.4,533.1 371.0,523.8 372.7,533.7 374.4,523.3 376.0,533.5 377.7,523.6 379.3,532.5 381.0,523.4 382.6,532.7 384.3,524.3 385.9,532.6 387.6,524.0 389.3,533.2 390.9,523.7 392.6,533.1 394.2,523.3 395.9,532.4 397.5,523.5 399.2,533.3 400.8,523.8 402.5,532.7 404.2,524.0 405.8,532.9 407.5,523.6 409.1,533.4 410.8,524.2 412.4,532.6 414.1,524.0 415.7,533.0 417.4,524.4 419.0,533.3 420.7,523.6 422.4,533.7 424.0,523.4 425.7,532.9 427.3,524.3 429.0,532.5 430.6,523.9 432.3,532.4 433.9,524.1 435.6,533.4" fill="none" stroke="#7fca86" stroke-width="0.9" stroke-linejoin="round"/><polyline points="338.4,553.7 340.0,547.8 341.6,553.4 343.1,547.6 344.7,553.7 346.3,547.5 347.9,553.6 349.4,547.7 351.0,554.0 352.6,547.4 354.2,553.8 355.7,547.0 357.3,553.8 358.9,547.5 360.5,554.1 362.0,547.7 363.6,553.4 365.2,547.3 366.8,553.8 368.4,546.9 369.9,553.6 371.5,547.1 373.1,553.2 374.7,547.0 376.2,553.9 377.8,547.0 379.4,553.3 381.0,547.3 382.5,554.0 384.1,547.0 385.7,553.5 387.3,547.4 388.9,554.0 390.4,547.7 392.0,554.0 393.6,547.2 395.2,553.5 396.7,547.3 398.3,554.0 399.9,547.9 401.5,553.3 403.0,547.1 404.6,553.3 406.2,547.1 407.8,553.6 409.4,547.5 410.9,553.4 412.5,546.9 414.1,553.5 415.7,547.3 417.2,553.7 418.8,547.9 420.4,553.8 422.0,547.4 423.5,553.7 425.1,547.6 426.7,553.2 428.3,547.8 429.8,553.9 431.4,547.8 433.0,553.9 434.6,542.4 436.2,553.0" fill="none" stroke="#7fca86" stroke-width="0.9" stroke-linejoin="round"/><polyline points="338.6,574.2 354.2,574.2 355.6,565.0 356.4,563.6 357.4,565.0 358.8,574.2 385.8,574.2 387.4,572.0 389.2,572.2 390.2,574.2 436.2,574.2" fill="none" stroke="#7fca86" stroke-width="0.9" stroke-linejoin="round"/><polyline points="338.8,594.4 340.6,586.0 341.6,592.5 343.4,586.3 345.1,591.8 346.9,586.9 348.6,591.7 350.4,585.5 352.1,592.0 353.9,585.7 355.6,592.4 357.4,585.4 359.1,591.5 360.9,585.7 362.6,591.8 364.4,586.2 366.2,591.6 367.9,587.6 369.7,593.1 371.4,585.7 373.2,592.2 374.9,586.2 376.7,592.4 378.4,585.6 380.2,593.7 381.9,587.9 383.7,592.7 385.4,586.6 387.2,591.7 389.0,585.6 390.7,592.4 392.5,586.0 394.2,593.7 396.0,585.7 397.7,591.6 399.5,587.8 401.2,592.9 403.0,585.7 404.7,592.9 406.5,585.4 408.2,592.9 410.0,587.8 411.8,593.7 413.5,587.1 415.3,592.2 417.0,586.3 418.8,591.9 420.5,587.3 422.3,592.9 424.0,587.3 425.8,592.4 427.5,585.9 429.3,593.6 431.0,587.9 432.8,593.7 434.0,594.4 436.4,594.4" fill="none" stroke="#7fca86" stroke-width="0.9" stroke-linejoin="round"/><polyline points="338.8,609.8 342.6,609.8 343.6,606.0 344.6,609.8 352.0,609.8 352.6,607.8 353.2,609.8 436.0,609.8" fill="none" stroke="#7fca86" stroke-width="0.9" stroke-linejoin="round"/><polyline points="599.4,533.1 616.6,533.1 619.1,530.2 621.2,533.1 640.4,533.1 643.6,523.0 644.6,523.0 647.1,528.6 649.4,523.0 650.4,523.0 653.8,533.1 666.6,533.1 669.1,530.2 671.4,533.1 697.0,533.1" fill="none" stroke="#7fca86" stroke-width="0.9" stroke-linejoin="round"/><polyline points="599.4,553.5 607.6,553.5 610.8,542.5 611.6,542.5 615.2,553.5 618.6,542.5 619.6,542.5 622.4,553.5 638.4,553.5 641.0,542.5 645.0,542.5 647.0,551.0 649.2,542.5 650.0,542.5 653.2,553.5 672.6,553.5 675.4,542.5 678.8,542.5 680.4,550.4 682.2,542.5 683.0,542.5 685.6,553.5 697.0,553.5" fill="none" stroke="#7fca86" stroke-width="0.9" stroke-linejoin="round"/><polyline points="599.4,574.5 616.6,574.5 619.1,570.6 621.2,574.5 641.2,574.5 644.3,564.0 647.4,574.5 648.2,574.5 649.5,571.4 651.4,574.5 686.2,574.5 688.4,570.2 692.0,570.2 694.4,574.5 697.0,574.5" fill="none" stroke="#7fca86" stroke-width="0.9" stroke-linejoin="round"/><polyline points="599.4,594.4 602.8,594.4 605.0,591.4 607.2,594.4 617.0,594.4 619.4,591.4 621.6,594.4 640.2,594.4 643.2,584.2 646.4,594.4 647.8,594.4 649.5,591.6 651.6,594.4 660.8,594.4 663.1,591.6 665.4,594.4 697.0,594.4" fill="none" stroke="#7fca86" stroke-width="0.9" stroke-linejoin="round"/><polyline points="599.4,609.9 642.6,609.9 644.8,604.0 646.8,604.0 649.0,609.9 697.0,609.9" fill="none" stroke="#7fca86" stroke-width="0.9" stroke-linejoin="round"/></svg>
<div style="position:absolute;left:44.20px;top:609.40px;width:932.40px;height:26.60px;background:#f5f8f8;"></div>
<div style="position:absolute;left:44.20px;top:629.80px;width:932.40px;height:6.20px;background:#f1f5f5;"></div>
<div style="position:absolute;left:44.20px;top:609.00px;width:932.40px;height:1.00px;background:#c9cdd0;"></div>
<svg style="left:49px;top:617.4px" width="10" height="9"><path d="M0 1H1.6M2.8 1H9.4M0 3.4H1.6M2.8 3.4H9.4M0 5.8H1.6M2.8 5.8H9.4M0 8.2H1.6M2.8 8.2H9.4" stroke="#a3a9af" stroke-width="1.1"/></svg>
<svg style="left:71.2px;top:617.0px" width="10" height="10"><path d="M4.6 0.4V8.8M0.4 4.6H8.8" stroke="#555d66" stroke-width="1.1"/></svg>
<span id="t110" style="position:absolute;left:88.10px;transform-origin:0 50%;top:616.97px;font:400 9.6px/9.6px 'Liberation Sans', sans-serif;color:#3a424b;white-space:pre;transform:scaleX(0.9437);">No investigation is currently loaded. Please create (+) or load an existing one (≡).</span>
<svg style="left:961.8px;top:617.6px" width="13" height="13"><circle cx="4.8" cy="4.8" r="3.5" fill="none" stroke="#8d949b" stroke-width="1.0"/><path d="M7.4 7.4L10.4 10.4" stroke="#8d949b" stroke-width="1.5" stroke-linecap="round"/><path d="M3.3 4.8H6.3M4.8 3.3V6.3" stroke="#8d949b" stroke-width="0.8"/></svg>
<div style="position:absolute;left:42.30px;top:74.00px;width:1.10px;height:562.00px;background:#a2a4a6;"></div>
<div style="position:absolute;left:977.60px;top:74.00px;width:1.10px;height:562.00px;background:#a8aaac;"></div>
</div></body></html>
